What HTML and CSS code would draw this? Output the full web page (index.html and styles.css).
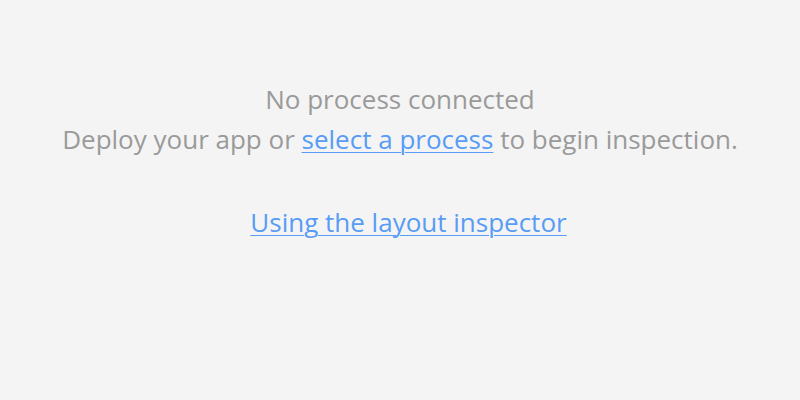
FILE: index.html
```html
<!DOCTYPE html>
<html>
<head>
<meta charset="utf-8">
<link rel="stylesheet" href="styles.css">
</head>
<body>
<div class="empty">
  <div class="title">No process connected</div>
  <div class="line">Deploy your app or <a class="link" href="#">select a process</a> to begin inspection.</div>
  <div class="help"><a class="link" href="#">Using the layout inspector</a></div>
</div>
</body>
</html>
```
FILE: styles.css
```css
html, body {
  margin: 0;
  padding: 0;
  background: #f4f4f4;
  width: 800px;
  height: 400px;
  overflow: hidden;
}
.empty {
  display: flex;
  flex-direction: column;
  align-items: center;
  padding-top: 79px;
  font-family: "Open Sans", sans-serif;
  font-size: 26px;
  line-height: 40px;
  color: #9a9a9a;
}
.help {
  margin-top: 43px;
  padding-left: 17px;
}
.link {
  color: #589cf5;
  text-decoration: underline;
  text-decoration-thickness: 1px;
  text-underline-offset: 3px;
}
```
